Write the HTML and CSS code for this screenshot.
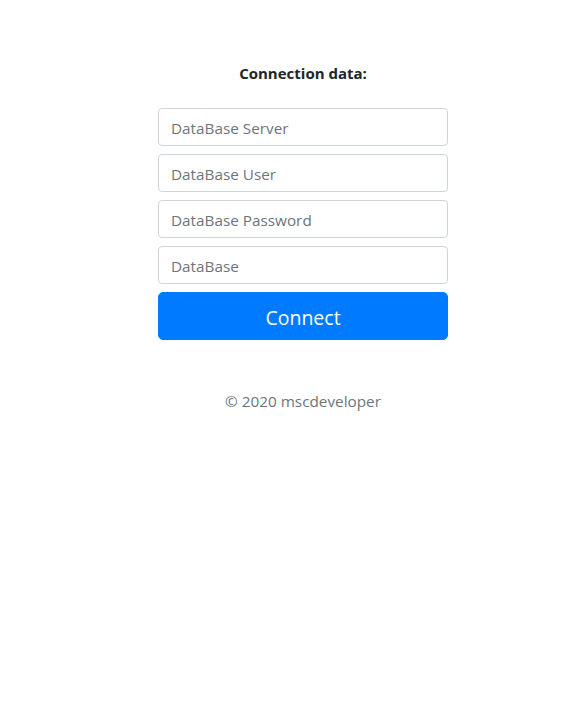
FILE: index.html
```html
<!DOCTYPE html>
<html>
<head>
<meta charset="utf-8">
<link rel="stylesheet" href="styles.css">
</head>
<body>
<div class="page">
  <form class="form-signin">
    <h1 class="title">Connection data:</h1>
    <input class="field" type="text" placeholder="DataBase Server">
    <input class="field" type="text" placeholder="DataBase User">
    <input class="field" type="password" placeholder="DataBase Password">
    <input class="field" type="text" placeholder="DataBase">
    <button class="btn" type="button">Connect</button>
    <p class="footer">© 2020 mscdeveloper</p>
  </form>
</div>
</body>
</html>
```
FILE: styles.css
```css
* { box-sizing: border-box; }
html, body { margin: 0; padding: 0; background: #fff; }
body {
  font-family: "Open Sans", "Noto Sans", Arial, sans-serif;
  font-size: 15.3px;
  color: #212529;
}
.page {
  padding-top: 64px;
  padding-left: 158px;
}
.form-signin {
  width: 290px;
  display: flex;
  flex-direction: column;
  gap: 8px;
}
.title {
  margin: 0 0 18px 0;
  font-size: 15px;
  font-weight: 700;
  text-align: center;
  line-height: 18px;
  color: #212529;
}
.field {
  height: 38px;
  border: 1px solid #ced4da;
  border-radius: 4px;
  padding: 7px 12px 5px 12px;
  font-family: inherit;
  font-size: 15.3px;
  color: #495057;
  outline: none;
}
.field::placeholder { color: #6c757d; opacity: 1; }
.btn {
  height: 48px;
  border: 1px solid #007bff;
  background: #007bff;
  color: #fff;
  border-radius: 5px;
  font-family: inherit;
  font-size: 19.5px;
  padding: 2px 0 0 0;
  cursor: pointer;
}
.footer {
  margin: 41px 0 0 0;
  text-align: center;
  color: #6c757d;
  line-height: 24px;
}
```
